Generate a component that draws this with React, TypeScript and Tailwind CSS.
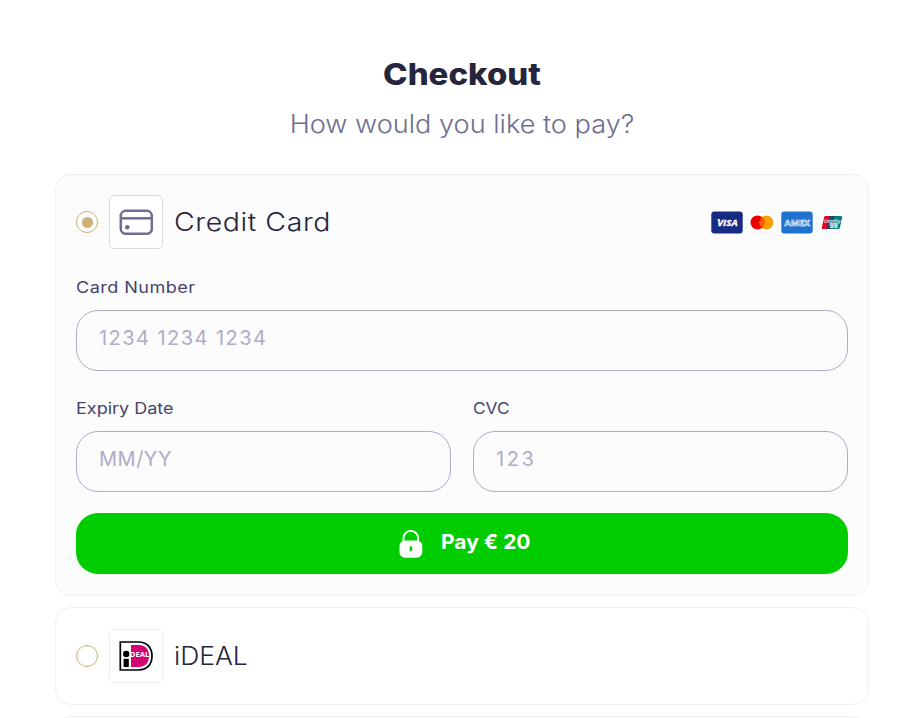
import React, { useState } from 'react';

const CreditCardIcon: React.FC = () => (
    <svg width="34" height="26" viewBox="0 0 34 26" fill="none" stroke="#6f6e90" strokeWidth="2.5">
        <rect x="1.8" y="1.8" width="31" height="23" rx="5" />
        <path d="M1.7 9.300h31.200" />
        <circle cx="8.300" cy="18.300" r="2.300" fill="#6f6e90" stroke="none" />
    </svg>
);

const IdealIcon: React.FC = () => (
    <svg width="34" height="30" viewBox="0 0 34 30">
        <path d="M1.300 1h18.200c8.500 0 13.500 5.600 13.500 14s-5 14-13.500 14H1.300z" fill="#fff" stroke="#000" strokeWidth="1.700" />
        <path d="M12 4h7.500c7 0 10.500 4.200 10.500 11s-3.500 11-10.500 11H12z" fill="#d50072" />
        <circle cx="7.200" cy="13" r="3.200" />
        <path d="M4.600 17.800h5.200v8.200H4.600z" />
        <text x="10.800" y="15.500" fill="#fff" fontFamily="Open Sans, sans-serif" fontSize="7.600" fontWeight="700" textLength="19.400" lengthAdjust="spacingAndGlyphs">DEAL</text>
    </svg>
);

const LockIcon: React.FC = () => (
    <svg width="24" height="28" viewBox="0 0 24 28">
        <path d="M4.500 12V8.200a7.300 7.300 0 0 1 14.600 0V12" fill="none" stroke="#fff" strokeWidth="1.900" />
        <rect x=".5" y="10.500" width="22.800" height="17.200" rx="5.500" fill="#fff" />
        <rect x="10.600" y="16.200" width="2.600" height="5" rx="1.200" fill="#00cd00" />
    </svg>
);

const VisaBadge: React.FC = () => (
    <svg width="32" height="23" viewBox="0 0 32 23">
        <rect x=".3" y=".5" width="31.400" height="22" rx="3" fill="#172b85" />
        <text x="6.300" y="15.300" fill="#fff" stroke="#fff" strokeWidth=".3" fontFamily="Open Sans, sans-serif" fontSize="9.600" fontWeight="700" fontStyle="italic" textLength="20.300" lengthAdjust="spacingAndGlyphs">VISA</text>
        <path d="M5.300 8h3.200l1 2.600c-1-1.200-2.200-2-4.200-2.600z" fill="#fff" />
    </svg>
);

const MastercardBadge: React.FC = () => (
    <svg width="32" height="23" viewBox="0 0 32 23">
        <rect x="1" y="1" width="30" height="21" rx="3" fill="#fff" stroke="#f5f5f7" />
        <circle cx="20.300" cy="11.500" r="7" fill="#f99f00" />
        <circle cx="11.500" cy="11.500" r="7" fill="#ed0006" />
        <path d="M15.900 6a7 7 0 0 1 0 11 7 7 0 0 1 0-11z" fill="#ff5e00" />
    </svg>
);

const AmexBadge: React.FC = () => (
    <svg width="32" height="23" viewBox="0 0 32 23">
        <rect x=".3" y=".5" width="31.400" height="22" rx="3" fill="#1f72cd" />
        <text x="3.600" y="14.800" fill="#1f72cd" stroke="#fff" strokeWidth=".6" fontFamily="Open Sans, sans-serif" fontSize="9.300" fontWeight="700" textLength="25.400" lengthAdjust="spacingAndGlyphs">AMEX</text>
    </svg>
);

const UnionPayBadge: React.FC = () => (
    <svg width="32" height="23" viewBox="0 0 32 23">
        <rect x="1" y="1" width="30" height="21" rx="3" fill="#fff" stroke="#f5f5f7" />
        <path d="M9.500 5h6l-3 13H7a1.200 1.200 0 0 1-1.200-1.500l2.400-10.400A1.400 1.400 0 0 1 9.500 5z" fill="#dd0228" />
        <path d="M14.600 5h6.500l-3 13h-6.200a1.200 1.200 0 0 1-1.200-1.500l2.500-10.400A1.400 1.400 0 0 1 14.600 5z" fill="#21486b" />
        <path d="M20.200 5H25a1.200 1.200 0 0 1 1.200 1.500l-2.400 10.400a1.400 1.400 0 0 1-1.400 1.100h-5.200a1.200 1.200 0 0 1-1.200-1.500l2.500-10.400A1.400 1.400 0 0 1 20.200 5z" fill="#067d80" />
        <text x="8" y="11.500" fill="#fff" fontFamily="Inter, sans-serif" fontSize="4.500" fontWeight="500" fontStyle="italic" textLength="16.500" lengthAdjust="spacingAndGlyphs">UnionPay</text>
        <text x="13.600" y="16" fill="#fff" fontFamily="Noto Sans CJK SC, sans-serif" fontSize="4.500" fontWeight="700" textLength="8.500" lengthAdjust="spacingAndGlyphs">银联</text>
    </svg>
);

const Radio: React.FC<{ checked: boolean; onClick: () => void; label: string }> = ({ checked, onClick, label }) => (
    <button
        type="button"
        role="radio"
        aria-checked={checked}
        aria-label={label}
        onClick={onClick}
        className="w-[22px] h-[22px] rounded-full border border-[#cdae70] bg-white flex items-center justify-center"
    >
        {checked && <span className="w-[11px] h-[11px] rounded-full bg-[#cdb077]" />}
    </button>
);

interface FieldProps {
    id: string;
    label: string;
    placeholder: string;
    labelClass: string;
    inputClass: string;
}

const Field: React.FC<FieldProps> = ({ id, label, placeholder, labelClass, inputClass }) => (
    <div className="flex flex-col items-start min-w-0">
        <label htmlFor={id} className={`origin-left text-base leading-6 text-[#46446a] ${labelClass}`}>{label}</label>
        <input
            id={id}
            placeholder={placeholder}
            className={`mt-[11px] h-[61px] w-full rounded-[22px] border border-[#aeacc6] bg-transparent pl-[22px] pb-1.5 text-xl outline-none placeholder:text-[#aeacc6] ${inputClass}`}
        />
    </div>
);

const App: React.FC = () => {
    const [method, setMethod] = useState('card');

    return (
        <main className="h-[718px] overflow-hidden bg-white px-[55px] pt-[53px] font-['Inter',sans-serif] text-[#25253d]">
            <header className="text-center">
                <h1 className="text-[30px] leading-[42px] font-extrabold scale-x-[1.1]">Checkout</h1>
                <p className="mt-[9px] text-[25px] leading-10 font-[350] scale-x-[1.085] text-[#6f6e90]">How would you like to pay?</p>
            </header>

            <div role="radiogroup" className="mt-[30px] flex flex-col gap-[11px]">
                <section className="h-[422px] shrink-0 rounded-2xl border border-[#efeff5] bg-[#fcfcfc] px-5 pt-5">
                    <div className="flex items-center">
                        <Radio checked={method === 'card'} onClick={() => setMethod('card')} label="Credit Card" />
                        <div className="ml-[11px] w-[54px] h-[54px] rounded-[5px] border border-[#d9d8e4] bg-white flex items-center justify-center">
                            <CreditCardIcon />
                        </div>
                        <h2 className="ml-[11px] origin-left scale-x-[1.14] text-[25px] leading-8 font-[350] tracking-[0.5px] pb-px">Credit Card</h2>
                        <div className="ml-auto flex gap-[3px]">
                            <VisaBadge />
                            <MastercardBadge />
                            <AmexBadge />
                            <UnionPayBadge />
                        </div>
                    </div>
                    <div className="mt-[26px]">
                        <Field id="number" label="Card Number" placeholder="1234 1234 1234" labelClass="scale-x-[1.13] tracking-[0.4px]" inputClass="tracking-[1.45px]" />
                    </div>
                    <div className="mt-[25px] grid grid-cols-2 gap-[22px]">
                        <Field id="expiry" label="Expiry Date" placeholder="MM/YY" labelClass="scale-x-[1.125]" inputClass="tracking-[0.5px]" />
                        <Field id="cvc" label="CVC" placeholder="123" labelClass="scale-x-[1.08]" inputClass="tracking-[2.6px]" />
                    </div>
                    <button type="button" className="mt-[21px] w-full h-[61px] rounded-[22px] bg-[#00cd00] pl-0.5 text-white flex items-center justify-center gap-[18px]">
                        <LockIcon />
                        <span className="origin-left scale-x-[1.05] pb-1 text-xl font-bold">Pay € 20</span>
                    </button>
                </section>

                <section className="h-[98px] shrink-0 rounded-2xl border border-[#efeff5] bg-white px-5 flex items-center">
                    <Radio checked={method === 'ideal'} onClick={() => setMethod('ideal')} label="iDEAL" />
                    <div className="ml-[11px] w-[54px] h-[54px] rounded-[5px] border border-[#efeff5] flex items-center justify-center">
                        <IdealIcon />
                    </div>
                    <h2 className="ml-[11px] origin-left scale-x-[1.06] text-[25px] leading-8 font-[350] pb-px">iDEAL</h2>
                </section>

                <section className="h-[98px] shrink-0 rounded-2xl border border-[#efeff5] bg-white" />
            </div>
        </main>
    );
};

export default App;
